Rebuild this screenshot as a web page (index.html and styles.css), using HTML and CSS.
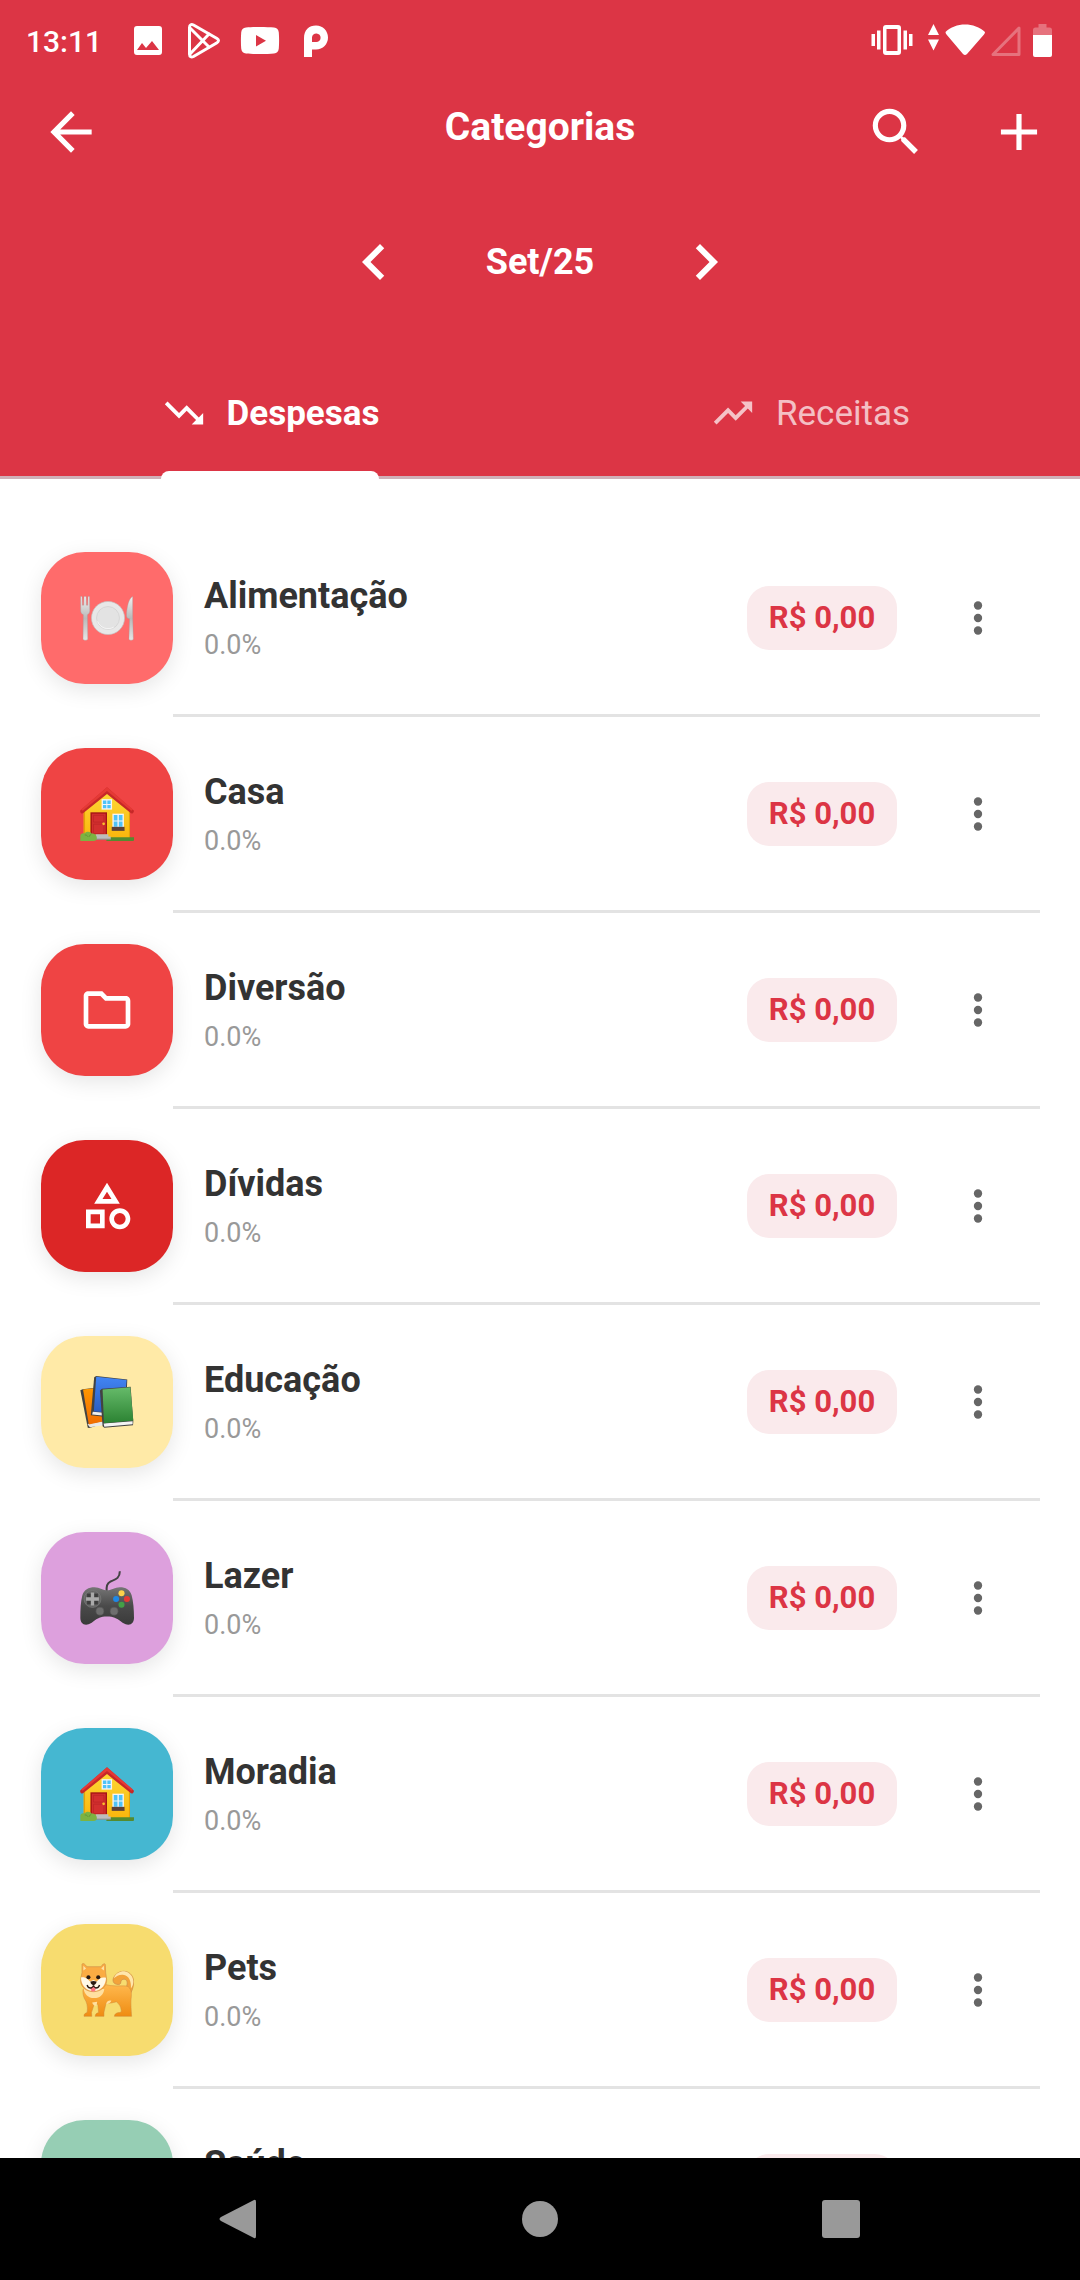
FILE: index.html
```html
<!DOCTYPE html>
<html lang="pt-BR">
<head>
<meta charset="utf-8">
<meta name="viewport" content="width=device-width, initial-scale=1">
<title>Categorias</title>
<link rel="stylesheet" href="styles.css">
</head>
<body>
<svg class="defs" width="0" height="0" aria-hidden="true">
  <defs>
    <linearGradient id="wall" x1="0" y1="0" x2="0" y2="1"><stop offset="0" stop-color="#fdd835"/><stop offset="1" stop-color="#fbb50c"/></linearGradient>
    <linearGradient id="blue" x1="0" y1="0" x2="0" y2="1"><stop offset="0" stop-color="#4285f4"/><stop offset="1" stop-color="#2a5cc0"/></linearGradient>
    <linearGradient id="green" x1="0" y1="0" x2="0" y2="1"><stop offset="0" stop-color="#66bb6a"/><stop offset="1" stop-color="#2b8232"/></linearGradient>
    <linearGradient id="orange" x1="0" y1="0" x2="0" y2="1"><stop offset="0" stop-color="#ff9800"/><stop offset="1" stop-color="#f06c00"/></linearGradient>
    <linearGradient id="pad" x1="0" y1="0" x2="0" y2="1"><stop offset="0" stop-color="#757575"/><stop offset=".5" stop-color="#4a4a4a"/><stop offset="1" stop-color="#3a3a3a"/></linearGradient>
    <linearGradient id="fur" x1="0" y1="0" x2="0" y2="1"><stop offset="0" stop-color="#ffb84d"/><stop offset="1" stop-color="#ef8c12"/></linearGradient>
    <linearGradient id="steel" x1="0" y1="0" x2="0" y2="1"><stop offset="0" stop-color="#f1f1f1"/><stop offset=".5" stop-color="#b9b9b9"/><stop offset="1" stop-color="#e6e6e6"/></linearGradient>
    <symbol id="house" viewBox="152 167 160 160">
      <path fill="url(#wall)" d="M163 238l69-54 68 54v83H163z"/>
      <path fill="#e3a008" d="M163 238l4-3v84h-4zM297 236l3 2v83h-3z"/>
      <path fill="#c62828" d="M152 237l80-69 80 69c-1 7-5 9-9 8l-71-57-71 57c-5 1-8-1-9-8z"/>
      <path fill="#e53935" d="M155 234l77-66 77 66-5 3-72-58-72 58z"/>
      <path fill="#f5f5f5" d="M216 203h31v31h-31z"/>
      <path fill="#4fc3f7" d="M220 207h10v10h-10zM233 207h10v10h-10zM220 220h10v10h-10zM233 220h10v10h-10z"/>
      <path fill="#a31515" d="M183 242h49v66h-49z"/>
      <path fill="#d32f2f" d="M187 246h41v61h-41z"/>
      <path fill="none" stroke="#b92424" stroke-width="2" d="M192 251h31v20h-31zM192 277h31v28h-31z"/>
      <circle cx="222" cy="276" r="4" fill="#fbc02d"/>
      <path fill="#f5f5f5" d="M248 246h34v40h-34z"/>
      <path fill="#4fc3f7" d="M252 250h11v16h-11zM267 250h11v16h-11zM252 269h11v16h-11zM267 269h11v16h-11z"/>
      <path fill="#5d4037" d="M246 285h38v12h-38z"/>
      <path fill="#558b2f" d="M232 316h80v7c0 3-2 4-4 4h-78z"/>
      <path fill="#bdbdbd" d="M198 307h38v7h7v8h-45z"/>
      <path fill="#8d8d8d" d="M198 320h45v3h-45z"/>
      <path fill="#7cb342" d="M153 327v-15c0-7 8-10 12-7 5-8 18-7 21 0 9-1 16 5 16 13 0 5-4 9-9 9z"/>
      <path fill="none" stroke="#558b2f" stroke-width="2" d="M166 309c5 0 8 2 9 5M185 308c-4 1-6 4-6 7"/>
    </symbol>
    <symbol id="more" viewBox="0 0 24 24"><circle cx="12" cy="6" r="2"/><circle cx="12" cy="12" r="2"/><circle cx="12" cy="18" r="2"/></symbol>
  </defs>
</svg>

<div class="app">
  <header class="header">
    <div class="status">
      <div class="status-left">
        <span class="clock">13:11</span>
        <svg class="status-icon" viewBox="128 21 40 40"><path fill-rule="evenodd" d="M137 26h22a3 3 0 0 1 3 3v23a3 3 0 0 1-3 3h-22a3 3 0 0 1-3-3V29a3 3 0 0 1 3-3zm0 24h22l-7-9-6 7-4-5z"/></svg>
        <svg class="status-icon" viewBox="184 21 40 40"><g fill="none" stroke="#fff" stroke-width="3" stroke-linejoin="round" stroke-linecap="round"><path d="M189.500 27.500c0-3 2-3.500 4-2.500l23.500 13.500c2 1.200 2 3 0 4.200L193.500 56.500c-2 1-4 .5-4-2.500z"/><path d="M190 28l19 19M190 54l19-20"/></g></svg>
        <svg class="status-icon" viewBox="240 21 40 40"><path fill-rule="evenodd" d="M246 27.500c7-.7 21-.7 28 0 3 .3 4.500 2 4.800 5 .4 5 .4 11 0 16-.3 3-1.800 4.700-4.800 5-7 .7-21 .7-28 0-3-.3-4.500-2-4.800-5-.4-5-.4-11 0-16 .3-3 1.800-4.700 4.800-5zM256 35v11.500l10-5.700z"/></svg>
        <svg class="status-icon" viewBox="296 21 40 40"><path fill-rule="evenodd" d="M304 57V38c0-8 5-12.500 12-12.500S328 31 328 37.500s-5 12-12 12h-4V57zM312 42h4a4.300 4.300 0 1 0-4-4.500z"/></svg>
      </div>
      <div class="status-right">
        <svg width="46" height="34" viewBox="870 24 46 34"><path fill-rule="evenodd" d="M886 25h12a3 3 0 0 1 3 3v24a3 3 0 0 1-3 3h-12a3 3 0 0 1-3-3V28a3 3 0 0 1 3-3zm.5 4v22h11V29zM871.500 34h3.500v12h-3.500zM877 30.500h3.500v19H877zM903.500 30.500h3.500v19h-3.500zM909 34h3.500v12H909z"/></svg>
        <svg width="93" height="34" viewBox="928 24 93 34"><path d="M933.500 24l5.500 11h-11zM933.500 50.500l5.500-11h-11zM945.500 32c10-10 29-10 39.500 0 0 1-.3 1.700-1 2.500L967 54q-2 2-4 0l-16.500-19.500c-.7-.8-1-1.500-1-2.500z"/><path fill="none" stroke="#fff" stroke-opacity=".3" stroke-width="3" stroke-linejoin="round" d="M1019 28v26.500h-26z"/></svg>
        <svg width="19" height="34" viewBox="1033 24 19 34"><path fill-opacity=".3" d="M1033 35v-5q0-2.500 2.500-2.500h3V24h8v3.500h3q2.500 0 2.500 2.500v5z"/><path d="M1033 35h19v20q0 2-2 2h-15q-2 0-2-2z"/></svg>
      </div>
    </div>

    <div class="appbar">
      <button class="icon-button back" type="button" aria-label="Voltar"><svg class="icon" viewBox="0 0 24 24"><path d="M20 11H7.830l5.590-5.590L12 4l-8 8 8 8 1.410-1.410L7.830 13H20v-2z"/></svg></button>
      <h1 class="title">Categorias</h1>
      <div class="actions">
        <button class="icon-button" type="button" aria-label="Pesquisar"><svg class="icon" viewBox="0 0 24 24"><path d="M15.500 14h-.79l-.28-.27A6.471 6.471 0 0 0 16 9.500 6.500 6.500 0 1 0 9.500 16c1.610 0 3.090-.59 4.230-1.570l.27.28v.79l5 4.990L20.490 19l-4.990-5zm-6 0C7.010 14 5 11.990 5 9.500S7.010 5 9.500 5 14 7.010 14 9.500 11.990 14 9.500 14z"/></svg></button>
        <button class="icon-button" type="button" aria-label="Adicionar"><svg class="icon" viewBox="0 0 24 24"><path d="M19 13h-6v6h-2v-6H5v-2h6V5h2v6h6v2z"/></svg></button>
      </div>
    </div>

    <div class="month">
      <button class="icon-button" type="button" aria-label="Mês anterior"><svg class="icon-large" viewBox="0 0 24 24"><path d="M15.410 7.410L14 6l-6 6 6 6 1.410-1.410L10.830 12z"/></svg></button>
      <span class="month-name">Set/25</span>
      <button class="icon-button" type="button" aria-label="Próximo mês"><svg class="icon-large" viewBox="0 0 24 24"><path d="M10 6L8.590 7.410 13.170 12l-4.580 4.590L10 18l6-6z"/></svg></button>
    </div>

    <div class="tabs" role="tablist">
      <button class="tab tab-active" type="button" role="tab" aria-selected="true"><span class="tab-label"><svg class="icon-small" viewBox="0 0 24 24"><path d="M16 18l2.290-2.290-4.880-4.880-4 4L2 7.410 3.410 6l6 6 4-4 6.300 6.290L22 12v6z"/></svg>Despesas</span></button>
      <button class="tab" type="button" role="tab" aria-selected="false"><span class="tab-label"><svg class="icon-small" viewBox="0 0 24 24"><path d="M16 6l2.290 2.290-4.880 4.880-4-4L2 16.590 3.410 18l6-6 4 4 6.300-6.290L22 12V6z"/></svg>Receitas</span></button>
    </div>
  </header>

  <main class="content">
    <ul class="list">
      <li class="row">
        <span class="tile coral"><svg class="emoji" viewBox="182 182 160 160">
          <path fill="url(#steel)" stroke="#9e9e9e" stroke-width="1" d="M184 198h4l1 26h4l1-26h6l1 26h4l1-26h4l1 42c0 7-3 10-7 12l1 72c0 5-14 5-14 0l1-72c-5-2-8-5-8-12z"/>
          <circle cx="265" cy="262" r="49" fill="#e8e8e8" stroke="#c2c2c2" stroke-width="2"/>
          <circle cx="265" cy="262" r="34" fill="#e3e3e3" stroke="#cfcfcf" stroke-width="2"/>
          <path fill="none" stroke="#fff" stroke-width="2" d="M234 272a33 33 0 0 0 48 17"/>
          <path fill="url(#steel)" stroke="#9e9e9e" stroke-width="1" d="M338 198v60l2 66c0 5-13 5-13 0l2-60c-6 0-9-3-9-9 0-25 7-52 18-57z"/>
        </svg></span>
        <div class="body"><div class="text"><span class="name">Alimentação</span><span class="percent">0.0%</span></div><span class="amount">R$ 0,00</span><button class="icon-button menu" type="button" aria-label="Opções de Alimentação"><svg class="dots"><use href="#more"/></svg></button></div>
      </li>
      <li class="row">
        <span class="tile red"><svg class="emoji"><use href="#house"/></svg></span>
        <div class="body"><div class="text"><span class="name">Casa</span><span class="percent">0.0%</span></div><span class="amount">R$ 0,00</span><button class="icon-button menu" type="button" aria-label="Opções de Casa"><svg class="dots"><use href="#more"/></svg></button></div>
      </li>
      <li class="row">
        <span class="tile red"><svg class="glyph" viewBox="0 0 24 24"><path d="M9.170 6l2 2H20v10H4V6h5.170M10 4H4c-1.100 0-1.990.9-1.990 2L2 18c0 1.100.9 2 2 2h16c1.100 0 2-.9 2-2V8c0-1.100-.9-2-2-2h-8l-2-2z"/></svg></span>
        <div class="body"><div class="text"><span class="name">Diversão</span><span class="percent">0.0%</span></div><span class="amount">R$ 0,00</span><button class="icon-button menu" type="button" aria-label="Opções de Diversão"><svg class="dots"><use href="#more"/></svg></button></div>
      </li>
      <li class="row">
        <span class="tile crimson"><svg class="glyph" viewBox="0 0 24 24"><path d="M12 2l-5.500 9h11L12 2zm0 3.840L13.930 9h-3.870L12 5.840zM17.500 13c-2.490 0-4.500 2.010-4.500 4.500s2.010 4.500 4.500 4.500 4.500-2.010 4.500-4.500-2.010-4.500-4.500-4.500zm0 7a2.500 2.500 0 0 1 0-5 2.500 2.500 0 0 1 0 5zM3 21.500h8v-8H3v8zm2-6h4v4H5v-4z"/></svg></span>
        <div class="body"><div class="text"><span class="name">Dívidas</span><span class="percent">0.0%</span></div><span class="amount">R$ 0,00</span><button class="icon-button menu" type="button" aria-label="Opções de Dívidas"><svg class="dots"><use href="#more"/></svg></button></div>
      </li>
      <li class="row">
        <span class="tile cream"><svg class="emoji" viewBox="152 165 160 160">
          <path fill="#424242" d="M153 210l7-3 50-6 16 106-46 15-5-1z"/>
          <path fill="#e8e8e8" d="M174 310l50-9 2 12-45 7z"/>
          <path fill="url(#orange)" d="M161 208l55-7 10 100-48 11z"/>
          <path fill="#424242" d="M194 172l6-4 92 10-4 108-50 4-54-6z"/>
          <path fill="#eee" d="M190 274l50 4v9l-52-5z"/>
          <path fill="url(#blue)" d="M200 170l90 10-8 98-89-5z"/>
          <path fill="#424242" d="M211 211l6-5 85-6 8 104-1 10-85 7-5-4z"/>
          <path fill="#f3f3f3" d="M222 309l86-7v9l-84 7z"/>
          <path fill="url(#green)" d="M219 208l82-7 9 99-87 8z"/>
        </svg></span>
        <div class="body"><div class="text"><span class="name">Educação</span><span class="percent">0.0%</span></div><span class="amount">R$ 0,00</span><button class="icon-button menu" type="button" aria-label="Opções de Educação"><svg class="dots"><use href="#more"/></svg></button></div>
      </li>
      <li class="row">
        <span class="tile plum"><svg class="emoji" viewBox="152 153 160 160">
          <path fill="none" stroke="#424242" stroke-width="6" d="M231 215c-1-16 0-25 12-31 14-6 27-9 27-30"/>
          <path fill="url(#pad)" d="M153 292c0-25 1-48 6-67 5-17 18-24 36-24 16 0 22 9 37 9s23-9 38-9c18 0 30 7 35 24 5 19 7 42 7 67 0 11-6 20-17 20-22 0-25-24-63-24s-39 24-62 24c-11 0-17-9-17-20z"/>
          <circle cx="189" cy="236" r="25" fill="#656565" stroke="#7c7c7c" stroke-width="2"/>
          <path fill="#3c3c3c" d="M173 220h32v32h-32z"/>
          <path fill="#aaa" d="M184 217h10v14h14v10h-14v14h-10v-14h-14v-10h14z"/>
          <circle cx="211" cy="272" r="12" fill="#6e6e6e" stroke="#4f4f4f" stroke-width="2"/>
          <circle cx="253" cy="272" r="12" fill="#6e6e6e" stroke="#4f4f4f" stroke-width="2"/>
          <circle cx="275" cy="219" r="9" fill="#fdd24a"/>
          <circle cx="259" cy="236" r="9" fill="#1e88e5"/>
          <circle cx="291" cy="236" r="9" fill="#e53935"/>
          <circle cx="275" cy="253" r="9" fill="#43a047"/>
        </svg></span>
        <div class="body"><div class="text"><span class="name">Lazer</span><span class="percent">0.0%</span></div><span class="amount">R$ 0,00</span><button class="icon-button menu" type="button" aria-label="Opções de Lazer"><svg class="dots"><use href="#more"/></svg></button></div>
      </li>
      <li class="row">
        <span class="tile sky"><svg class="emoji"><use href="#house"/></svg></span>
        <div class="body"><div class="text"><span class="name">Moradia</span><span class="percent">0.0%</span></div><span class="amount">R$ 0,00</span><button class="icon-button menu" type="button" aria-label="Opções de Moradia"><svg class="dots"><use href="#more"/></svg></button></div>
      </li>
      <li class="row">
        <span class="tile gold"><svg class="emoji" viewBox="152 162 160 160">
          <path fill="#f3a33a" stroke="#c98a4a" stroke-width="2" d="M280 246c12-14 14-24 10-32-5-7-16-4-17 4 1 7-6 9-13 7-12-3-12-14-7-22 7-12 20-18 33-16 15 2 25 15 25 31 0 12-3 22-9 34z"/>
          <path fill="#ffe6ac" d="M252 207c7-16 21-22 34-20 14 3 24 16 24 30 0 9-3 15-7 20 1-20-5-38-24-40-11-1-19 5-27 10z"/>
          <path fill="url(#fur)" stroke="#cf8a3a" stroke-width="1.500" d="M161 240l67-14c20 6 40 3 60 4 12 2 18 14 16 32-2 15-1 30 1 58h-27l-24 0c0-6 5-10 12-11 6 0 10-2 8-8-1-10-6-18-14-24-12 3-22 5-31 5l-6 26 0 12h-26c0-7 5-10 10-11l-2-25h-11l-8 25 1 11h-23c-1-6 3-9 9-11 3-18-1-32-8-42-4-9-5-18-4-27z"/>
          <path fill="#ffe0a0" d="M163 239h61c-2 16-12 27-30 27s-29-12-31-27zM188 279l15-2-2 12c-7 0-11-4-13-10zM230 281c3-7 8-9 15-7-2 6-7 9-15 10z"/>
          <path fill="#fbac43" stroke="#d1904a" stroke-width="2" d="M158 166c2-6 10 0 14 7h42c4-7 12-12 13-6l1 24 3 20c1 20-16 35-38 36-22 0-38-13-39-31 0-9 2-17 4-25z"/>
          <path fill="#ffe3a5" d="M162 170l8 8-8 6zM223 170l-8 8 8 6z"/>
          <path fill="#fff8e6" d="M155 205c13-3 22 7 27 12l10-5 10 5c5-7 14-15 27-11 0 20-14 39-37 40-22-2-37-18-37-41z"/>
          <circle cx="177" cy="204" r="6" fill="#2a1a12"/><circle cx="206" cy="204" r="6" fill="#2a1a12"/>
          <path fill="#2a1a12" d="M183 217q9-4 18 0c0 6-5 10-9 11-5-1-9-5-9-11z"/>
          <path fill="#ff7480" d="M184 234q8-6 14 0v9q-7 8-14 0z"/>
          <path fill="none" stroke="#2a1a12" stroke-width="4" d="M173 227q3 10 12 9 6-1 7-8 1 7 7 8 8 0 11-9"/>
        </svg></span>
        <div class="body"><div class="text"><span class="name">Pets</span><span class="percent">0.0%</span></div><span class="amount">R$ 0,00</span><button class="icon-button menu" type="button" aria-label="Opções de Pets"><svg class="dots"><use href="#more"/></svg></button></div>
      </li>
      <li class="row">
        <span class="tile mint"></span>
        <div class="body"><div class="text"><span class="name">Saúde</span></div><span class="amount">R$ 0,00</span><button class="icon-button menu" type="button" aria-label="Opções de Saúde"><svg class="dots"><use href="#more"/></svg></button></div>
      </li>
    </ul>
  </main>

  <nav class="navbar" aria-label="Navegação do sistema">
    <button class="icon-button" type="button" aria-label="Voltar"><svg width="42" height="42" viewBox="0 0 42 42"><path d="M35 2q2-1 2 2v34q0 3-2 2L2 23q-3-2 0-4z"/></svg></button>
    <button class="icon-button" type="button" aria-label="Início"><svg width="42" height="42" viewBox="0 0 42 42"><circle cx="21" cy="21" r="18"/></svg></button>
    <button class="icon-button" type="button" aria-label="Recentes"><svg width="42" height="42" viewBox="0 0 42 42"><rect x="3" y="2" width="38" height="38" rx="3"/></svg></button>
  </nav>
</div>
</body>
</html>
```
FILE: styles.css
```css
* {
  box-sizing: border-box;
}

body {
  margin: 0;
  background: #fff;
  color: #333;
  font-family: Roboto, "Noto Sans", sans-serif;
}

svg {
  display: block;
  flex: none;
}

.defs {
  position: absolute;
}

.app {
  display: flex;
  flex-direction: column;
  height: 100vh;
  overflow: hidden;
}

.icon-button {
  display: flex;
  align-items: center;
  justify-content: center;
  padding: 0;
  border: 0;
  background: none;
  color: inherit;
}

/* Header */

.header {
  flex: none;
  background: #dc3545;
  color: #fff;
}

.header svg {
  fill: currentColor;
}

.status {
  display: flex;
  align-items: center;
  justify-content: space-between;
  height: 82px;
  padding: 0 28px 0 26px;
}

.status-left {
  display: flex;
  align-items: center;
  gap: 16px;
}

.clock {
  min-width: 86px;
  font-size: 30px;
  font-weight: 500;
}

.status-icon {
  width: 40px;
  height: 40px;
}

.status-right {
  display: flex;
  gap: 12px;
}

.appbar {
  display: grid;
  grid-template-columns: 1fr auto 1fr;
  align-items: center;
  height: 100px;
  padding: 0 30px;
}

.back {
  justify-self: start;
  margin-left: 10px;
}

.icon {
  width: 62px;
  height: 62px;
}

.title {
  margin: 0;
  padding-bottom: 10px;
  font-size: 39px;
  font-weight: 700;
}

.actions {
  display: flex;
  justify-self: end;
  gap: 61px;
}

.month {
  display: flex;
  align-items: center;
  justify-content: center;
  gap: 76px;
  height: 160px;
}

.month-name {
  font-size: 36px;
  font-weight: 700;
}

.icon-large {
  width: 72px;
  height: 72px;
}

.tabs {
  display: flex;
  height: 137px;
  border-bottom: 3px solid #d0b0b8;
}

.tab {
  display: flex;
  flex: 1;
  justify-content: center;
  padding: 0;
  border: 0;
  background: none;
  color: rgb(255 255 255 / 70%);
  font: inherit;
  font-size: 35px;
}

.tab-label {
  position: relative;
  display: flex;
  align-items: center;
  gap: 20px;
  height: 134px;
  padding-top: 8px;
}

.tab-active {
  color: #fff;
  font-weight: 700;
}

.tab-active .tab-label::after {
  position: absolute;
  right: 0;
  bottom: -3px;
  left: 0;
  height: 8px;
  border-radius: 8px 8px 0 0;
  background: #fff;
  content: "";
}

.icon-small {
  width: 46px;
  height: 46px;
}

/* Category list */

.content {
  flex: 1;
  min-height: 0;
  overflow: hidden;
}

.list {
  margin: 0;
  padding: 42px 40px 0 41px;
  list-style: none;
}

.row {
  display: flex;
  align-items: center;
  height: 196px;
}

.tile {
  display: flex;
  flex: none;
  align-items: center;
  justify-content: center;
  width: 132px;
  height: 132px;
  margin-bottom: 2px;
  border-radius: 44px;
  box-shadow: 0 6px 22px rgb(0 0 0 / 10%);
}

.coral { background: #ff6b6b; }
.red { background: #ef4444; }
.crimson { background: #dc2626; }
.cream { background: #ffeaa7; }
.plum { background: #dda0dd; }
.sky { background: #45b7d1; }
.gold { background: #f7dc6f; }
.mint { background: #96ceb4; }

.emoji {
  width: 54px;
  height: 54px;
}

.glyph {
  width: 56px;
  height: 56px;
  fill: #fff;
}

.body {
  display: flex;
  flex: 1;
  align-items: center;
  height: 196px;
  padding-left: 31px;
  border-bottom: 3px solid #e3e3e3;
}

.text {
  display: flex;
  flex: 1;
  flex-direction: column;
  height: 103px;
  padding-top: 5px;
}

.name {
  font-size: 36px;
  font-weight: 700;
  line-height: 50px;
}

.percent {
  color: #999;
  font-size: 27px;
  line-height: 48px;
}

.amount {
  min-width: 150px;
  border-radius: 22px;
  background: #faeaec;
  color: #dc3545;
  font-size: 31px;
  font-weight: 700;
  line-height: 64px;
  text-align: center;
}

.menu {
  width: 125px;
  margin-left: 18px;
  color: #666;
}

.dots {
  width: 50px;
  height: 50px;
  fill: currentColor;
}

/* System navigation */

.navbar {
  display: flex;
  flex: none;
  align-items: center;
  justify-content: space-around;
  height: 122px;
  padding: 0 90px;
  background: #000;
}

.navbar svg {
  fill: #999;
}
```
